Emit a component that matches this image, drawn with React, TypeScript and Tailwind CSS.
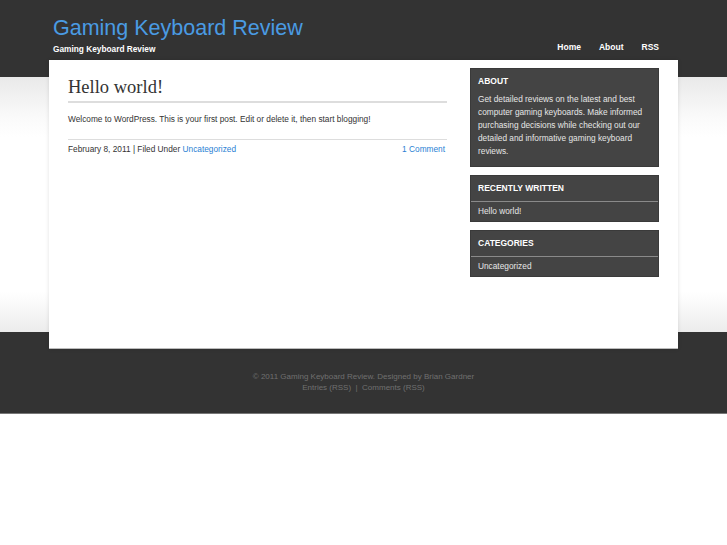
import React from "react";

const sans = { fontFamily: '"Liberation Sans", Arial, sans-serif' };

function Widget({ title, item }: { title: string; item: string }) {
  return (
    <div className="bg-[#444] border border-[#3a3a3a]">
      <div className="h-[26px] flex items-center px-[7px] text-[8.5px] font-bold text-white border-b border-[#8a8a8a]">
        {title}
      </div>
      <div className="h-[19px] flex items-center px-[7px] text-[8.3px] text-[#e6e6e6]">{item}</div>
    </div>
  );
}

export default function App() {
  return (
    <div className="w-[727px] bg-white min-h-[545px]" style={sans}>
      <div className="bg-[#333] h-[77px]">
        <div className="w-[629px] mx-auto flex justify-between">
          <div className="pl-[4px] pt-[14px]">
            <div className="text-[21.5px] leading-[28px] text-[#4a9be3]">Gaming Keyboard Review</div>
            <div className="text-[8.3px] font-bold text-white leading-[12px] mt-[1px]">Gaming Keyboard Review</div>
          </div>
          <div className="flex gap-[18px] pr-[19px] pt-[41px] text-[8.5px] font-bold text-white h-fit">
            <span>Home</span>
            <span>About</span>
            <span>RSS</span>
          </div>
        </div>
      </div>
      <div className="flow-root bg-[linear-gradient(to_bottom,#e9e9e9_0px,#fafafa_40px,#fff_60px,#fff_215px,#f6f6f6_235px,#ececec_255px)]">
        <div className="relative z-10 w-[629px] h-[289px] mx-auto -mt-[17px] -mb-[17px] bg-white border-b border-[#bbb] shadow-[0_0_4px_rgba(0,0,0,0.12)] flex gap-[23px]">
          <div className="w-[379px] ml-[19px] pt-[15px]">
            <h1 className="text-[18.5px] leading-[24px] text-[#333] pb-[2px] border-b-2 border-[#ddd]" style={{ fontFamily: '"Liberation Serif", "Times New Roman", serif' }}>
              Hello world!
            </h1>
            <p className="text-[8.3px] text-[#333] mt-[10px] leading-[12px]">
              Welcome to WordPress. This is your first post. Edit or delete it, then start blogging!
            </p>
            <div className="mt-[14px] border-t border-[#ddd] pt-[3px] flex justify-between text-[8.3px] leading-[12px] text-[#333]">
              <span>
                February 8, 2011 | Filed Under <span className="text-[#2a7fd4]">Uncategorized</span>
              </span>
              <span className="text-[#2a7fd4] pr-[2px]">1 Comment</span>
            </div>
          </div>
          <div className="w-[189px] pt-[8px] flex flex-col gap-[8px]">
            <div className="bg-[#444] border border-[#3a3a3a] px-[7px] pb-[8px]">
              <div className="text-[8.5px] font-bold text-white h-[24px] flex items-center">ABOUT</div>
              <p className="text-[8.3px] leading-[13px] text-[#e6e6e6]">
                Get detailed reviews on the latest and best computer gaming keyboards. Make informed purchasing decisions while checking out our detailed and informative gaming keyboard reviews.
              </p>
            </div>
            <Widget title="RECENTLY WRITTEN" item="Hello world!" />
            <Widget title="CATEGORIES" item="Uncategorized" />
          </div>
        </div>
      </div>
      <div className="bg-[#333] h-[82px] border-b border-[#777] pt-[39px] text-center text-[8px] leading-[11px] text-[#707070]">
        <div>© 2011 Gaming Keyboard Review. Designed by Brian Gardner</div>
        <div>Entries (RSS) &nbsp;|&nbsp; Comments (RSS)</div>
      </div>
    </div>
  );
}
